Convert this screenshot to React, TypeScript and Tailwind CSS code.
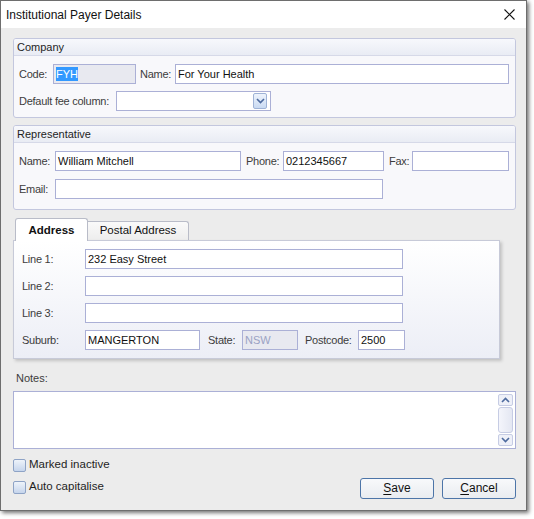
import type { ReactNode } from 'react'

const inputBorder = 'border border-[#abb0d6]'

function Field({
  w,
  value,
  disabled,
  selected,
  grow,
  children,
}: {
  w?: string
  value?: string
  disabled?: boolean
  selected?: boolean
  grow?: boolean
  children?: ReactNode
}) {
  return (
    <div
      className={`relative flex h-[20px] shrink-0 items-center ${inputBorder} px-[2px] text-[11px] ${
        disabled ? 'bg-[#e8e9f0] text-[#9aa2c4]' : 'bg-white text-[#111]'
      } ${grow ? 'flex-1' : ''} ${w ?? ''}`}
    >
      {selected ? (
        <span className="bg-[#3399ff] leading-[14px] text-white">{value}</span>
      ) : (
        <span>{value}</span>
      )}
      {children}
    </div>
  )
}

function Label({ w, children, ml }: { w: string; children: ReactNode; ml?: string }) {
  return (
    <span
      className={`shrink-0 whitespace-nowrap text-[11px] tracking-[-0.25px] text-[#3c3c3c] ${w} ${ml ?? ''}`}
    >
      {children}
    </span>
  )
}

function Group({ title, children, className }: { title: string; children: ReactNode; className?: string }) {
  return (
    <div className={`overflow-hidden rounded-[3px] border border-[#c3c7de] bg-[#f8f8fb] ${className ?? ''}`}>
      <div className="flex h-[17px] items-center border-b border-[#d6d9e8] bg-linear-to-b from-[#f7f8fc] to-[#e9ecf4] px-[3px] text-[11px] text-[#1e1e1e]">
        {title}
      </div>
      {children}
    </div>
  )
}

function Checkbox({ label }: { label: string }) {
  return (
    <div className="flex h-[13px] items-center gap-[3px]">
      <div className="h-[13px] w-[13px] rounded-[2px] border border-[#8ea3c6] bg-linear-to-b from-[#eef3fa] to-[#c6d5ec]" />
      <span className="text-[11.5px] text-[#1e1e1e]">{label}</span>
    </div>
  )
}

function Button({ hot, rest }: { hot: string; rest: string }) {
  return (
    <div className="flex h-[21px] w-[74px] items-center justify-center rounded-[3px] border border-[#4d75a8] bg-linear-to-b from-[#f8f9fb] to-[#e9ecf0] text-[12px] text-[#111]">
      <span className="underline underline-offset-2">{hot}</span>
      {rest}
    </div>
  )
}

function Chevron({ up }: { up?: boolean }) {
  return (
    <svg width="9" height="6" viewBox="0 0 9 6">
      <path
        d={up ? 'M1 5 L4.5 1.5 L8 5' : 'M1 1 L4.5 4.5 L8 1'}
        fill="none"
        stroke="#4d6a9e"
        strokeWidth="1.6"
      />
    </svg>
  )
}

export default function App() {
  return (
    <div className="h-[519px] w-[534px] bg-white font-['Liberation_Sans',Arial,sans-serif]">
      <div className="flex h-[511px] w-[527px] flex-col border border-[#6e6e6e] shadow-[2px_2px_4px_rgba(0,0,0,0.55)]">
        {/* title bar */}
        <div className="flex h-[27px] shrink-0 items-center justify-between bg-white pl-[5px] pr-[11px]">
          <span className="text-[12px] text-[#111]">Institutional Payer Details</span>
          <svg width="11" height="11" viewBox="0 0 11 11">
            <path d="M0.5 0.5 L10.5 10.5 M10.5 0.5 L0.5 10.5" stroke="#111" strokeWidth="1.1" />
          </svg>
        </div>

        <div className="flex flex-1 flex-col bg-[#ececec] pl-[12px] pr-[10px] pt-[10px]">
          <Group title="Company">
            <div className="flex flex-col gap-[7px] pb-[6px] pl-[5px] pr-[6px] pt-[8px]">
              <div className="flex items-center">
                <Label w="w-[34px]">Code:</Label>
                <Field w="w-[83px]" value="FYH" disabled selected />
                <Label w="w-[35px]" ml="ml-[4px]">
                  Name:
                </Label>
                <Field grow value="For Your Health" />
              </div>
              <div className="flex items-center">
                <Label w="w-[97px]">Default fee column:</Label>
                <Field w="w-[155px]">
                  <div className="absolute right-[3px] top-[1px] flex h-[16px] w-[14px] items-center justify-center rounded-[2px] border border-[#9fb3d6] bg-linear-to-b from-[#eef4fc] to-[#c9daf2]">
                    <Chevron />
                  </div>
                </Field>
              </div>
            </div>
          </Group>

          <Group title="Representative" className="mt-[7px]">
            <div className="flex flex-col gap-[8px] pb-[10px] pl-[5px] pr-[6px] pt-[8px]">
              <div className="flex items-center">
                <Label w="w-[36px]">Name:</Label>
                <Field w="w-[186px]" value="William Mitchell" />
                <Label w="w-[37px]" ml="ml-[5px]">
                  Phone:
                </Label>
                <Field w="w-[101px]" value="0212345667" />
                <Label w="w-[23px]" ml="ml-[5px]">
                  Fax:
                </Label>
                <Field grow />
              </div>
              <div className="flex items-center">
                <Label w="w-[36px]">Email:</Label>
                <Field w="w-[328px]" />
              </div>
            </div>
          </Group>

          {/* tabs */}
          <div className="mt-[8px] flex h-[22px] items-end pl-[2px]">
            <div className="relative z-10 -mb-px flex h-[23px] w-[73px] items-start justify-center rounded-t-[3px] border border-b-0 border-[#b9bcc8] bg-white pt-[3px] text-[11.5px] font-bold text-[#111]">
              Address
            </div>
            <div className="flex h-[19px] w-[101px] items-center justify-center rounded-tr-[3px] border border-b-0 border-l-0 border-[#b9bcc8] bg-linear-to-b from-[#fafafa] to-[#ededed] text-[11.5px] text-[#111]">
              Postal Address
            </div>
          </div>
          <div className="flex h-[119px] w-[487px] flex-col gap-[7px] border border-[#c7cad8] bg-linear-to-b from-white to-[#eceef6] pl-[8px] pt-[8px] shadow-[2px_2px_3px_rgba(0,0,0,0.18)]">
            <div className="flex items-center">
              <Label w="w-[63px]">Line 1:</Label>
              <Field w="w-[318px]" value="232 Easy Street" />
            </div>
            <div className="flex items-center">
              <Label w="w-[63px]">Line 2:</Label>
              <Field w="w-[318px]" />
            </div>
            <div className="flex items-center">
              <Label w="w-[63px]">Line 3:</Label>
              <Field w="w-[318px]" />
            </div>
            <div className="flex items-center">
              <Label w="w-[63px]">Suburb:</Label>
              <Field w="w-[115px]" value="MANGERTON" />
              <Label w="w-[34px]" ml="ml-[8px]">
                State:
              </Label>
              <Field w="w-[56px]" value="NSW" disabled />
              <Label w="w-[53px]" ml="ml-[7px]">
                Postcode:
              </Label>
              <Field w="w-[47px]" value="2500" />
            </div>
          </div>

          {/* notes */}
          <div className="mt-[11px] pl-[3px] text-[11px] text-[#3c3c3c]">Notes:</div>
          <div className={`mt-[4px] flex h-[58px] justify-end ${inputBorder} bg-white p-[1px] pr-[2px]`}>
            <div className="flex w-[16px] flex-col items-center gap-[1px] py-[1px]">
              <div className="flex h-[12px] w-[15px] items-center justify-center rounded-[2px] border border-[#c6cce4] bg-[#eef0f8]">
                <Chevron up />
              </div>
              <div className="w-[15px] flex-1 rounded-[3px] border border-[#c6cce4] bg-linear-to-r from-[#f4f5fb] to-[#e4e7f2]" />
              <div className="flex h-[12px] w-[15px] items-center justify-center rounded-[2px] border border-[#c6cce4] bg-[#eef0f8]">
                <Chevron />
              </div>
            </div>
          </div>

          <div className="mt-[10px] flex items-start justify-between">
            <div className="flex flex-col gap-[9px]">
              <Checkbox label="Marked inactive" />
              <Checkbox label="Auto capitalise" />
            </div>
            <div className="flex gap-[8px] pt-[19px]">
              <Button hot="S" rest="ave" />
              <Button hot="C" rest="ancel" />
            </div>
          </div>
        </div>
      </div>
    </div>
  )
}
